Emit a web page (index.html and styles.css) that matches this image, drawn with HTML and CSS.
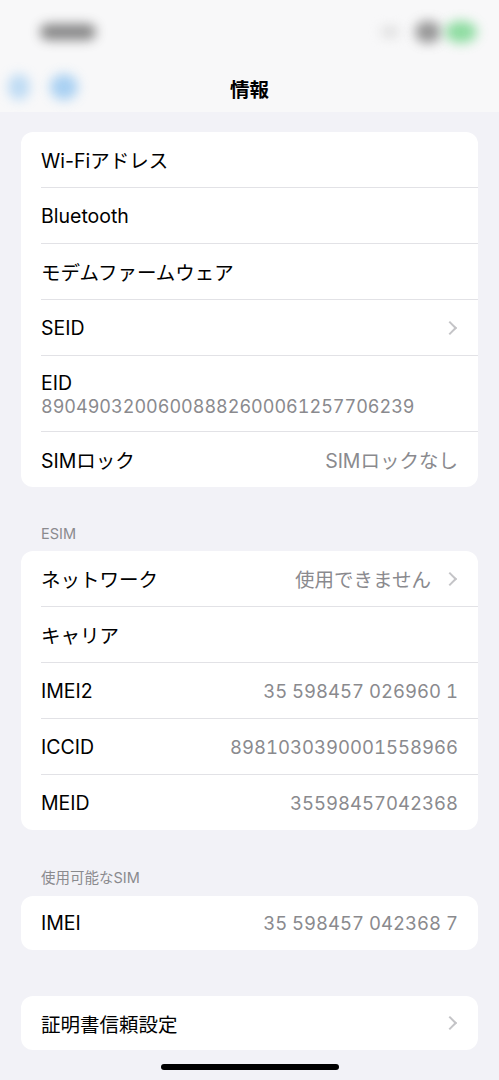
FILE: index.html
```html
<html>
  <head>
    <meta charset="utf-8">
    <link rel="stylesheet" href="styles.css">
  </head>
  <body>
    <div class="screen">
      <div class="top">
        <div class="status">
          <div class="blob time"></div>
          <div class="status-right">
            <div class="blob faint"></div>
            <div class="blob grey"></div>
            <div class="blob green"></div>
          </div>
        </div>
        <div class="nav">
          <div class="back">
            <div class="blob blue small"></div>
            <div class="blob blue"></div>
          </div>
          <h1>情報</h1>
        </div>
      </div>

      <div class="content">
        <div class="group">
          <div class="row"><span class="label">Wi-Fiアドレス</span></div>
          <div class="row"><span class="label">Bluetooth</span></div>
          <div class="row"><span class="label">モデムファームウェア</span></div>
          <div class="row"><span class="label">SEID</span><span class="chev"></span></div>
          <div class="row tall">
            <span class="label">EID</span>
            <span class="sub">89049032006008882600061257706239</span>
          </div>
          <div class="row"><span class="label">SIMロック</span><span class="value">SIMロックなし</span></div>
        </div>

        <div class="caption">ESIM</div>
        <div class="group">
          <div class="row"><span class="label">ネットワーク</span><span class="value">使用できません</span><span class="chev"></span></div>
          <div class="row"><span class="label">キャリア</span></div>
          <div class="row"><span class="label">IMEI2</span><span class="value num">35 598457 026960 1</span></div>
          <div class="row"><span class="label">ICCID</span><span class="value num">8981030390001558966</span></div>
          <div class="row"><span class="label">MEID</span><span class="value num">35598457042368</span></div>
        </div>

        <div class="caption close">使用可能なSIM</div>
        <div class="group">
          <div class="row"><span class="label">IMEI</span><span class="value num">35 598457 042368 7</span></div>
        </div>

        <div class="group spaced">
          <div class="row"><span class="label">証明書信頼設定</span><span class="chev"></span></div>
        </div>
      </div>
      <div class="home"></div>
    </div>
  </body>
</html>
```

FILE: styles.css
```css
body{
  margin: 0;
  background: #f2f2f7;
  font-family: Inter, "Noto Sans CJK JP", sans-serif;
  color: #000;
}
.screen{
  width: 499px;
  height: 1080px;
  position: relative;
  overflow: hidden;
}
.top{
  background: #f8f8f9;
  height: 112px;
}
.status{
  height: 64px;
  display: flex;
  align-items: center;
  justify-content: space-between;
  padding: 0 22px 0 40px;
}
.status-right{
  display: flex;
  align-items: center;
  gap: 4px;
}
.blob{
  border-radius: 50%;
  filter: blur(6px);
}
.time{
  width: 56px;
  height: 16px;
  border-radius: 8px;
  background: #3a3a3a;
  opacity: .6;
}
.faint{
  width: 18px;
  height: 10px;
  background: #d8d8d8;
  margin-right: 12px;
}
.grey{
  width: 26px;
  height: 22px;
  background: #6b6b6b;
  opacity: .7;
}
.green{
  width: 32px;
  height: 22px;
  background: #5fd07a;
  opacity: .7;
}
.nav{
  height: 48px;
  display: flex;
  align-items: center;
  justify-content: center;
  position: relative;
}
.back{
  position: absolute;
  left: 8px;
  top: 10px;
  display: flex;
  align-items: center;
  gap: 20px;
}
.blue{
  width: 28px;
  height: 26px;
  background: #8ec3f0;
  opacity: .75;
}
.blue.small{
  width: 22px;
  height: 26px;
  opacity: .55;
}
h1{
  margin: 0;
  font-size: 19.5px;
  font-weight: 700;
}
.content{
  padding: 20px 21px 0 21px;
}
.group{
  background: #fff;
  border-radius: 12px;
  padding-left: 20px;
}
.group.spaced{
  margin-top: 46px;
}
.row{
  height: 55px;
  display: flex;
  align-items: center;
  padding-right: 20px;
  border-bottom: 1px solid #e2e2e6;
  font-size: 19.5px;
}
.row:last-child{
  border-bottom: none;
}
.group > .row:only-child{
  height: 54px;
}
.row.tall{
  height: 75px;
  flex-direction: column;
  align-items: flex-start;
  justify-content: center;
  gap: 1px;
}
.label{
  flex: 1;
}
.row.tall .label{
  flex: none;
}
.sub{
  color: #8a8a8e;
  font-size: 18px;
  font-variant-numeric: tabular-nums;
}
.value{
  color: #8a8a8e;
}
.num{
  font-size: 18.5px;
  font-variant-numeric: tabular-nums;
}
.chev{
  width: 8px;
  height: 8px;
  border-top: 2px solid #c4c4c7;
  border-right: 2px solid #c4c4c7;
  transform: rotate(45deg);
  margin-left: 14px;
  margin-right: 3px;
}
.caption{
  font-size: 14.5px;
  color: #8a8a8e;
  padding: 38px 20px 9px;
}
.caption.close{
  padding-top: 36px;
}
.home{
  position: absolute;
  left: 161px;
  bottom: 10px;
  width: 178px;
  height: 6px;
  border-radius: 3px;
  background: #000;
}
```
